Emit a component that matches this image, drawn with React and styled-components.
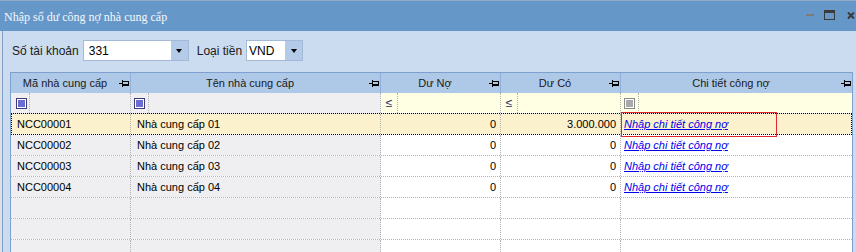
import React from "react";
import styled, { createGlobalStyle } from "styled-components";

const Global = createGlobalStyle`
  html, body { margin: 0; padding: 0; width: 856px; height: 252px; overflow: hidden; background: #cbdcf0; }
  #root { width: 856px; height: 252px; }
  * { box-sizing: border-box; }
`;

const COLS = "120px 250px 120px 120px 1fr";
const DOT = "#b3b3b3";

const Window = styled.div`
  width: 856px;
  height: 252px;
  display: flex;
  flex-direction: column;
  overflow: hidden;
  font-family: "Liberation Sans", Arial, sans-serif;
`;

const TitleBar = styled.div`
  height: 31px;
  flex: none;
  background: #6697c9;
  border-top: 1px solid #93a9c6;
  display: flex;
  align-items: center;
  padding-left: 4px;
`;

const Title = styled.div`
  flex: 1;
  padding-top: 2px;
  font-family: "Liberation Serif", "Times New Roman", serif;
  font-size: 12px;
  color: #f6f8fb;
  white-space: nowrap;
`;

const Controls = styled.div`
  display: flex;
  align-items: center;
  margin-top: -2px;
  padding-right: 1px;
`;

const CtrlIcon = styled.svg`
  display: block;
  margin-left: ${(p) => p.$gap}px;
  shape-rendering: crispEdges;
`;

const Frame = styled.div`
  flex: 1;
  display: flex;
  min-height: 0;
`;

const LeftStrip = styled.div`
  width: 2px;
  flex: none;
  background: #dde1e7;
`;

const Body = styled.div`
  flex: 1;
  display: flex;
  flex-direction: column;
  background: #cbdcf0;
  border-left: 1px solid #7f9ec8;
  min-width: 0;
`;

const Toolbar = styled.div`
  display: flex;
  align-items: center;
  padding: 9px 0 11px 9px;
  flex: none;
`;

const Label = styled.span`
  font-size: 12px;
  color: #1b1b1b;
  margin-left: ${(p) => p.$ml || 0}px;
  margin-right: 4px;
  white-space: nowrap;
`;

const Combo = styled.div`
  width: ${(p) => p.$w}px;
  height: 21px;
  display: flex;
  background: #fff;
  border: 1px solid #a3b9d6;
`;

const ComboValue = styled.div`
  flex: 1;
  display: flex;
  align-items: center;
  padding-left: ${(p) => p.$pad}px;
  font-size: 12px;
  color: #000;
`;

const ComboButton = styled.div`
  width: 17px;
  display: flex;
  align-items: center;
  justify-content: center;
  background: #b3cae8;
`;

const Triangle = styled.span`
  width: 0;
  height: 0;
  border-left: 3.5px solid transparent;
  border-right: 3.5px solid transparent;
  border-top: 4px solid #000;
`;

const Grid = styled.div`
  flex: 1;
  margin: 0 3px 0 7px;
  border: 1px solid #7ea0cf;
  border-bottom: none;
  background: #fff;
  overflow: hidden;
  font-size: 11px;
`;

const HeaderRow = styled.div`
  display: grid;
  grid-template-columns: ${COLS};
  height: 20px;
  background: #aec8e7;
`;

const HeaderCell = styled.div`
  display: flex;
  align-items: center;
  border-right: 1px solid #8fb0da;
  color: #1a1a1a;
  white-space: nowrap;
  &:last-child { border-right: none; }
`;

const HeaderText = styled.span`
  flex: 1;
  text-align: center;
`;

const PinIcon = styled.svg`
  flex: none;
  margin-right: 1px;
  shape-rendering: crispEdges;
`;

const FilterRow = styled.div`
  display: grid;
  grid-template-columns: ${COLS};
  height: 21px;
  border-bottom: 1px solid #e6e6e6;
`;

const FilterCell = styled.div`
  display: flex;
  background: ${(p) => (p.$ro ? "#efeff1" : "#ffffe4")};
  border-right: 1px dotted ${DOT};
  &:last-child { border-right: none; }
`;

const OpBox = styled.div`
  width: ${(p) => p.$w || 18}px;
  display: flex;
  align-items: center;
  justify-content: center;
  padding-left: ${(p) => p.$pl || 0}px;
  border-right: 1px dotted ${DOT};
  color: #1e1e5a;
  font-size: 12px;
`;

const Check = styled.span`
  width: 11px;
  height: 11px;
  border: 1px solid ${(p) => (p.$off ? "#8a8a8a" : "#3c3c78")};
  background: ${(p) => (p.$off ? "#a9a9a9" : "#6b6bd2")};
  box-shadow: inset 0 0 0 1px #fff;
`;

const Row = styled.div`
  position: relative;
  display: grid;
  grid-template-columns: ${COLS};
  height: 21px;
  border-bottom: 1px dotted ${DOT};
  ${(p) =>
    p.$focus &&
    `
    &::after {
      content: "";
      position: absolute;
      left: 0; right: 0; top: -1px; bottom: -1px;
      border: 1px dotted #000;
      pointer-events: none;
      z-index: 1;
    }
  `}
`;

const Cell = styled.div`
  position: relative;
  display: flex;
  align-items: center;
  justify-content: ${(p) => (p.$right ? "flex-end" : "flex-start")};
  padding: ${(p) => (p.$link ? "0 0 0 3px" : p.$right ? "0 4px 0 0" : "0 0 0 6px")};
  background: ${(p) => (p.$focus ? "#fcf1cd" : p.$ro ? "#efeff1" : "#ffffff")};
  border-right: 1px dotted ${DOT};
  color: #000;
  white-space: nowrap;
  &:last-child { border-right: none; }
`;

const Link = styled.span`
  color: #0000ee;
  font-style: italic;
  text-decoration: underline;
`;

const RedBox = styled.div`
  position: absolute;
  left: 0;
  top: -2px;
  width: 156px;
  height: 25px;
  border: 1px solid #e0282c;
  z-index: 2;
  pointer-events: none;
`;

const Pin = () => (
  <PinIcon width="10" height="7" viewBox="0 0 10 7">
    <rect x="0" y="3" width="3" height="1" fill="#000" />
    <rect x="3" y="0" width="1" height="7" fill="#000" />
    <rect x="4" y="1" width="6" height="1" fill="#000" />
    <rect x="9" y="1" width="1" height="5" fill="#000" />
    <rect x="4" y="4" width="6" height="2" fill="#000" />
  </PinIcon>
);

const headers = ["Mã nhà cung cấp", "Tên nhà cung cấp", "Dư Nợ", "Dư Có", "Chi tiết công nợ"];

const rows = [
  { code: "NCC00001", name: "Nhà cung cấp 01", no: "0", co: "3.000.000" },
  { code: "NCC00002", name: "Nhà cung cấp 02", no: "0", co: "0" },
  { code: "NCC00003", name: "Nhà cung cấp 03", no: "0", co: "0" },
  { code: "NCC00004", name: "Nhà cung cấp 04", no: "0", co: "0" },
];

export default function App() {
  return (
    <>
      <Global />
      <Window>
        <TitleBar>
          <Title>Nhập số dư công nợ nhà cung cấp</Title>
          <Controls>
            <CtrlIcon $gap={0} width="8" height="2" viewBox="0 0 8 2">
              <rect x="0" y="0" width="8" height="2" fill="#7c7c7c" />
            </CtrlIcon>
            <CtrlIcon $gap={10} width="11" height="10" viewBox="0 0 11 10">
              <rect x="0" y="0" width="11" height="3" fill="#3a3a3a" />
              <rect x="0" y="0" width="1" height="10" fill="#3a3a3a" />
              <rect x="10" y="0" width="1" height="10" fill="#3a3a3a" />
              <rect x="0" y="9" width="11" height="1" fill="#3a3a3a" />
            </CtrlIcon>
            <CtrlIcon $gap={12} width="8" height="7" viewBox="0 0 8 7" style={{ shapeRendering: "auto" }}>
              <path d="M1 0.5 L7 6.5 M7 0.5 L1 6.5" stroke="#3a3a3a" strokeWidth="2" />
            </CtrlIcon>
          </Controls>
        </TitleBar>
        <Frame>
          <LeftStrip />
          <Body>
            <Toolbar>
              <Label>Số tài khoản</Label>
              <Combo $w={106}>
                <ComboValue $pad={5}>331</ComboValue>
                <ComboButton>
                  <Triangle />
                </ComboButton>
              </Combo>
              <Label $ml={8}>Loại tiền</Label>
              <Combo $w={57}>
                <ComboValue $pad={2}>VND</ComboValue>
                <ComboButton>
                  <Triangle />
                </ComboButton>
              </Combo>
            </Toolbar>
            <Grid>
              <HeaderRow>
                {headers.map((h) => (
                  <HeaderCell key={h}>
                    <HeaderText>{h}</HeaderText>
                    <Pin />
                  </HeaderCell>
                ))}
              </HeaderRow>
              <FilterRow>
                <FilterCell $ro>
                  <OpBox $w={19} $pl={2}><Check /></OpBox>
                </FilterCell>
                <FilterCell $ro>
                  <OpBox><Check /></OpBox>
                </FilterCell>
                <FilterCell>
                  <OpBox $w={17}>≤</OpBox>
                </FilterCell>
                <FilterCell>
                  <OpBox $w={17}>≤</OpBox>
                </FilterCell>
                <FilterCell>
                  <OpBox><Check $off /></OpBox>
                </FilterCell>
              </FilterRow>
              {rows.map((r, i) => {
                const f = i === 0;
                return (
                  <Row key={r.code} $focus={f}>
                    <Cell $ro $focus={f}>{r.code}</Cell>
                    <Cell $ro $focus={f}>{r.name}</Cell>
                    <Cell $right $focus={f}>{r.no}</Cell>
                    <Cell $right $focus={f}>{r.co}</Cell>
                    <Cell $link $focus={f}>
                      <Link>Nhập chi tiết công nợ</Link>
                      {f && <RedBox />}
                    </Cell>
                  </Row>
                );
              })}
              {[0, 1, 2].map((k) => (
                <Row key={"e" + k}>
                  <Cell $ro />
                  <Cell $ro />
                  <Cell />
                  <Cell />
                  <Cell />
                </Row>
              ))}
            </Grid>
          </Body>
        </Frame>
      </Window>
    </>
  );
}
